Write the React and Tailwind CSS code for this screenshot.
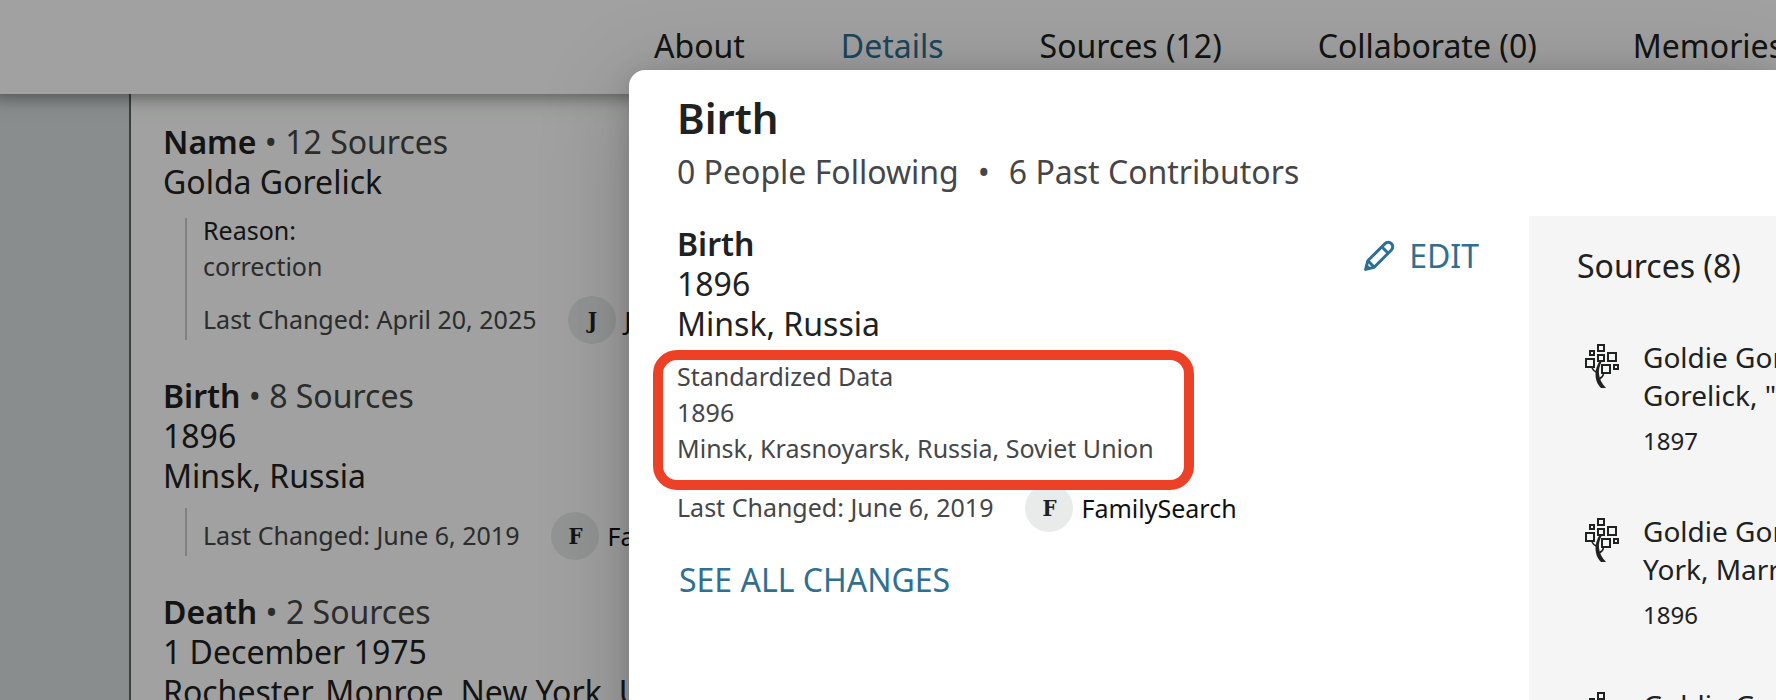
import React from "react";

const tabs = [
  { label: "About" },
  { label: "Details", active: true },
  { label: "Sources (12)" },
  { label: "Collaborate (0)" },
  { label: "Memories (0)" },
];

const facts = [
  {
    title: "Name",
    sources: "12 Sources",
    lines: ["Golda Gorelick"],
    reason: "correction",
    changed: "April 20, 2025",
    user: "JSmith",
  },
  {
    title: "Birth",
    sources: "8 Sources",
    lines: ["1896", "Minsk, Russia"],
    changed: "June 6, 2019",
    user: "FamilySearch",
  },
  {
    title: "Death",
    sources: "2 Sources",
    lines: ["1 December 1975", "Rochester, Monroe, New York, United States"],
  },
];

const sources = [
  { lines: ["Goldie Gorelick", 'Gorelick, "New York'], year: "1897" },
  { lines: ["Goldie Gorelick", "York, Marriages"], year: "1896" },
  { lines: ["Goldie Gorelick", "York, Census"], year: "1896" },
];

function Contributor({ changed, user }) {
  return (
    <div className="flex h-12 items-center whitespace-nowrap text-[25px] leading-9">
      <span className="pb-0.5 text-[#454647]">Last Changed: {changed}</span>
      <span className="ml-8 flex size-12 shrink-0 items-center justify-center rounded-full bg-[#e9ebeb] font-['DejaVu_Serif_Condensed','DejaVu_Serif',serif] text-[22px] font-bold text-[#202121]">
        {user[0]}
      </span>
      <span className="ml-2 text-[#101111]">{user}</span>
    </div>
  );
}

function Fact({ title, sources: count, lines, reason, changed, user }) {
  return (
    <section className="mb-9">
      <h2>
        <span className="font-semibold">{title}</span>
        <span className="text-[#454647]"> • {count}</span>
      </h2>
      {lines.map((line) => (
        <p key={line}>{line}</p>
      ))}
      {changed && (
        <div className={`ml-[22px] flow-root border-l-2 border-[#cbcccd] pl-4 ${reason ? "mt-4" : "mt-3 pt-1"}`}>
          {reason && (
            <div className="mb-[18px] flex flex-col gap-3 text-[25px] leading-6">
              <p>Reason:</p>
              <p className="text-[#454647]">{reason}</p>
            </div>
          )}
          <div className="-mb-1">
            <Contributor changed={changed} user={user} />
          </div>
        </div>
      )}
    </section>
  );
}

function PencilIcon() {
  return (
    <svg viewBox="0 0 32 32" className="size-8" fill="none" stroke="currentColor" strokeWidth="3" strokeLinejoin="round" aria-hidden="true">
      <path d="M2.600 29.400 4.800 20.800 22 3.600a4.500 4.500 0 0 1 6.400 0 4.500 4.500 0 0 1 0 6.400L11.200 27.200Z" />
      <path d="m18.800 6.800 6.400 6.400M5 20.800l6.200 6.400" />
      <path d="M1.500 30.500 3.300 23.500 8.500 28.700Z" fill="currentColor" stroke="none" />
    </svg>
  );
}

function TreeIcon() {
  return (
    <svg viewBox="0 0 34 44" className="h-11 w-[34px] shrink-0" fill="none" stroke="#202121" strokeWidth="2" aria-hidden="true">
      <rect x="13" y="1" width="6" height="6" />
      <rect x="5" y="7" width="4" height="4" />
      <rect x="1" y="15" width="8" height="8" />
      <rect x="13" y="11" width="6" height="6" />
      <rect x="23" y="9" width="8" height="8" />
      <rect x="17" y="21" width="8" height="8" />
      <rect x="29" y="21" width="4" height="4" />
      <path d="M7 24c1 2.500 3 3.500 5 4.500M18.500 30c-.5 2.500-2 4-4.500 5" strokeWidth="1.500" />
      <path d="M14 18h2.500c-2 4-3 8-2.500 12 .5 5 3 10 7 14h-5c-4-4-5.500-9-5.500-14 0-4.500 1.500-8.500 3.500-12Z" fill="#202121" stroke="none" />
    </svg>
  );
}

export default function App() {
  return (
    <div className="relative h-screen overflow-hidden bg-[#fdfffd] font-['Noto_Sans',sans-serif] text-[32px] leading-10 text-[#202121]">
      <div className="flex h-full flex-col">
        <header className="relative z-10 h-[94px] shrink-0 bg-[#fdfffd] pl-[654px] pt-[26px] shadow-[0_-8px_18px_10px_rgba(0,0,0,0.5)]">
          <nav className="flex gap-24 whitespace-nowrap">
            {tabs.map((tab) => (
              <a key={tab.label} href="#tab" className={tab.active ? "text-[#2f6f91]" : ""}>
                {tab.label}
              </a>
            ))}
          </nav>
        </header>
        <div className="flex min-h-0 flex-1">
          <div className="w-[129px] shrink-0 bg-[#d9dfe0]" />
          <main className="min-w-0 flex-1 overflow-hidden whitespace-nowrap border-l-2 border-[#5f6363] pl-8 pt-7">
            {facts.map((fact) => (
              <Fact key={fact.title} {...fact} />
            ))}
          </main>
        </div>
      </div>

      <div className="absolute inset-0 z-20 flex bg-black/37 pl-[629px] pt-[70px]">
        <div role="dialog" aria-label="Birth" className="-mb-24 flex min-w-0 flex-1 flex-col overflow-hidden rounded-tl-2xl bg-white shadow-[0_4px_24px_rgba(0,0,0,0.14),0_16px_90px_rgba(0,0,0,0.22)]">
          <div className="pb-6 pl-12 pt-[22px]">
            <h1 className="text-[42px] font-semibold leading-[52px]">Birth</h1>
            <p className="mt-2 flex gap-[19px] text-[#454647]">
              <span>0 People Following</span>
              <span>•</span>
              <span>6 Past Contributors</span>
            </p>
          </div>
          <div className="flex min-h-0 flex-1">
            <div className="w-[900px] shrink-0 px-12 pt-2">
              <div className="flex items-start justify-between">
                <div>
                  <h2 className="font-semibold">Birth</h2>
                  <p>1896</p>
                  <p>Minsk, Russia</p>
                </div>
                <button type="button" className="mt-3 flex items-center gap-3.5 pr-0.5 text-[#2f6f91]">
                  <PencilIcon />
                  EDIT
                </button>
              </div>
              <div className="relative mt-3.5 w-fit text-[25px] leading-9 text-[#454647]">
                <p>Standardized Data</p>
                <p>1896</p>
                <p>Minsk, Krasnoyarsk, Russia, Soviet Union</p>
                <div className="absolute -bottom-6 -left-6 -right-10 -top-2 z-10 rounded-3xl border-10 border-[#ec4126]" />
              </div>
              <div className="mt-[18px]">
                <Contributor changed="June 6, 2019" user="FamilySearch" />
              </div>
              <button type="button" className="mt-7 pl-0.5 text-[#2f6f91]">
                SEE ALL CHANGES
              </button>
            </div>
            <aside className="min-w-0 flex-1 overflow-hidden whitespace-nowrap bg-[#f5f5f5] pl-12 pt-[30px]">
              <h2>Sources (8)</h2>
              <ul className="mt-[52px] flex flex-col gap-[53px]">
                {sources.map((source, i) => (
                  <li key={i} className="flex gap-6 pl-2">
                    <div className="pt-1.5">
                      <TreeIcon />
                    </div>
                    <div>
                      {source.lines.map((line) => (
                        <p key={line} className="text-[28px] leading-[38px]">
                          {line}
                        </p>
                      ))}
                      <p className="mt-[9px] text-2xl leading-9">{source.year}</p>
                    </div>
                  </li>
                ))}
              </ul>
            </aside>
          </div>
        </div>
      </div>
    </div>
  );
}
